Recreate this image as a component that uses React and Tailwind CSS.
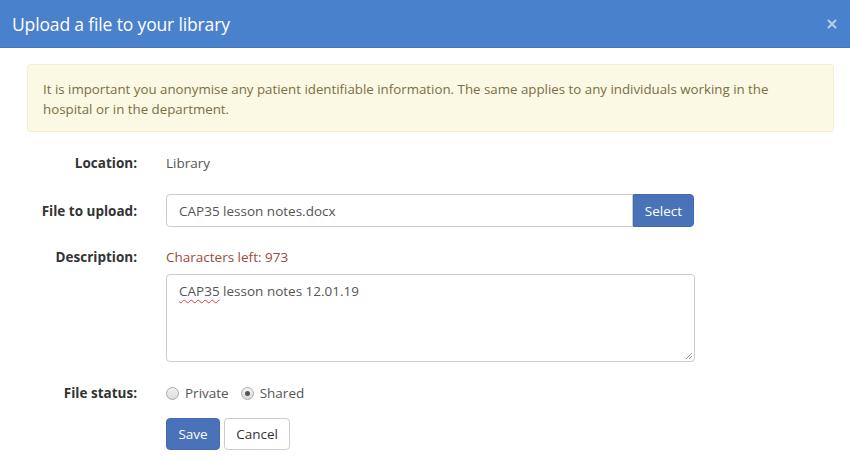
import { X } from "lucide-react";

const Label = ({ children }) => (
    <div className="w-[122px] shrink-0 text-right font-bold text-[#333]">{children}</div>
);

export default function App() {
    return (
        <div className="w-[850px] h-[459px] bg-white text-[13.5px] leading-5 text-[#555] overflow-hidden" style={{ fontFamily: '"Open Sans", "Noto Sans", sans-serif' }}>
            {/* Шапка */}
            <div className="h-[48px] bg-[#4a81cc] border-b border-[#4577bd] flex items-center justify-between pl-[12px] pr-[11px]">
                <h1 className="text-[17.5px] text-white tracking-[-0.15px]">Upload a file to your library</h1>
                <X size={14} strokeWidth={3.5} className="text-[#b9cdea]" />
            </div>

            <div className="pl-[15px]">
                {/* Предупреждение */}
                <div className="mt-[16px] ml-[12px] w-[807px] h-[68px] bg-[#fbf9e3] border border-[#f3efcf] rounded-[3px] px-[15px] py-[14px] text-[#7a6e48] text-[13.3px]">
                    It is important you anonymise any patient identifiable information. The same applies to any individuals working in the hospital or in the department.
                </div>

                <div className="flex items-center gap-[29px] mt-[21px]">
                    <Label>Location:</Label>
                    <div className="text-[#555]">Library</div>
                </div>

                <div className="flex items-center gap-[29px] mt-[21px]">
                    <Label>File to upload:</Label>
                    <div className="flex">
                        <div className="w-[467px] h-[33px] border border-[#ccc] rounded-l-[4px] px-[12px] flex items-center text-[#555]">CAP35 lesson notes.docx</div>
                        <button className="w-[61px] h-[33px] bg-[#4a72b8] text-white rounded-r-[4px] border border-[#436aad]">Select</button>
                    </div>
                </div>

                <div className="flex items-center gap-[29px] mt-[20px]">
                    <Label>Description:</Label>
                    <div className="text-[#9b4a40]">Characters left: 973</div>
                </div>

                <div className="ml-[151px] mt-[7px] relative w-[529px] h-[88px] border border-[#ccc] rounded-[4px] px-[12px] py-[6px] text-[#555]">
                    <span className="underline decoration-wavy decoration-[#e04040] decoration-1 underline-offset-[3px]">CAP35</span> lesson notes 12.01.19
                    <svg className="absolute right-[1px] bottom-[1px]" width="8" height="8" viewBox="0 0 8 8">
                        <path d="M7 1L1 7M7 4L4 7" stroke="#999" strokeWidth="1" />
                    </svg>
                </div>

                <div className="flex items-center gap-[29px] mt-[21px]">
                    <Label>File status:</Label>
                    <div className="flex items-center">
                        <span className="w-[13px] h-[13px] rounded-full border border-[#aaa] bg-gradient-to-b from-[#f2f2f2] to-[#dcdcdc]" />
                        <span className="ml-[6px]">Private</span>
                        <span className="ml-[12px] w-[13px] h-[13px] rounded-full border border-[#aaa] bg-gradient-to-b from-[#f2f2f2] to-[#dcdcdc] flex items-center justify-center">
                            <span className="w-[5px] h-[5px] rounded-full bg-[#555]" />
                        </span>
                        <span className="ml-[6px]">Shared</span>
                    </div>
                </div>

                <div className="ml-[151px] mt-[15px] flex gap-[4px]">
                    <button className="w-[54px] h-[32px] bg-[#4a72b8] border border-[#436aad] text-white rounded-[4px]">Save</button>
                    <button className="w-[66px] h-[32px] bg-white border border-[#ccc] text-[#333] rounded-[4px]">Cancel</button>
                </div>
            </div>
        </div>
    );
}
